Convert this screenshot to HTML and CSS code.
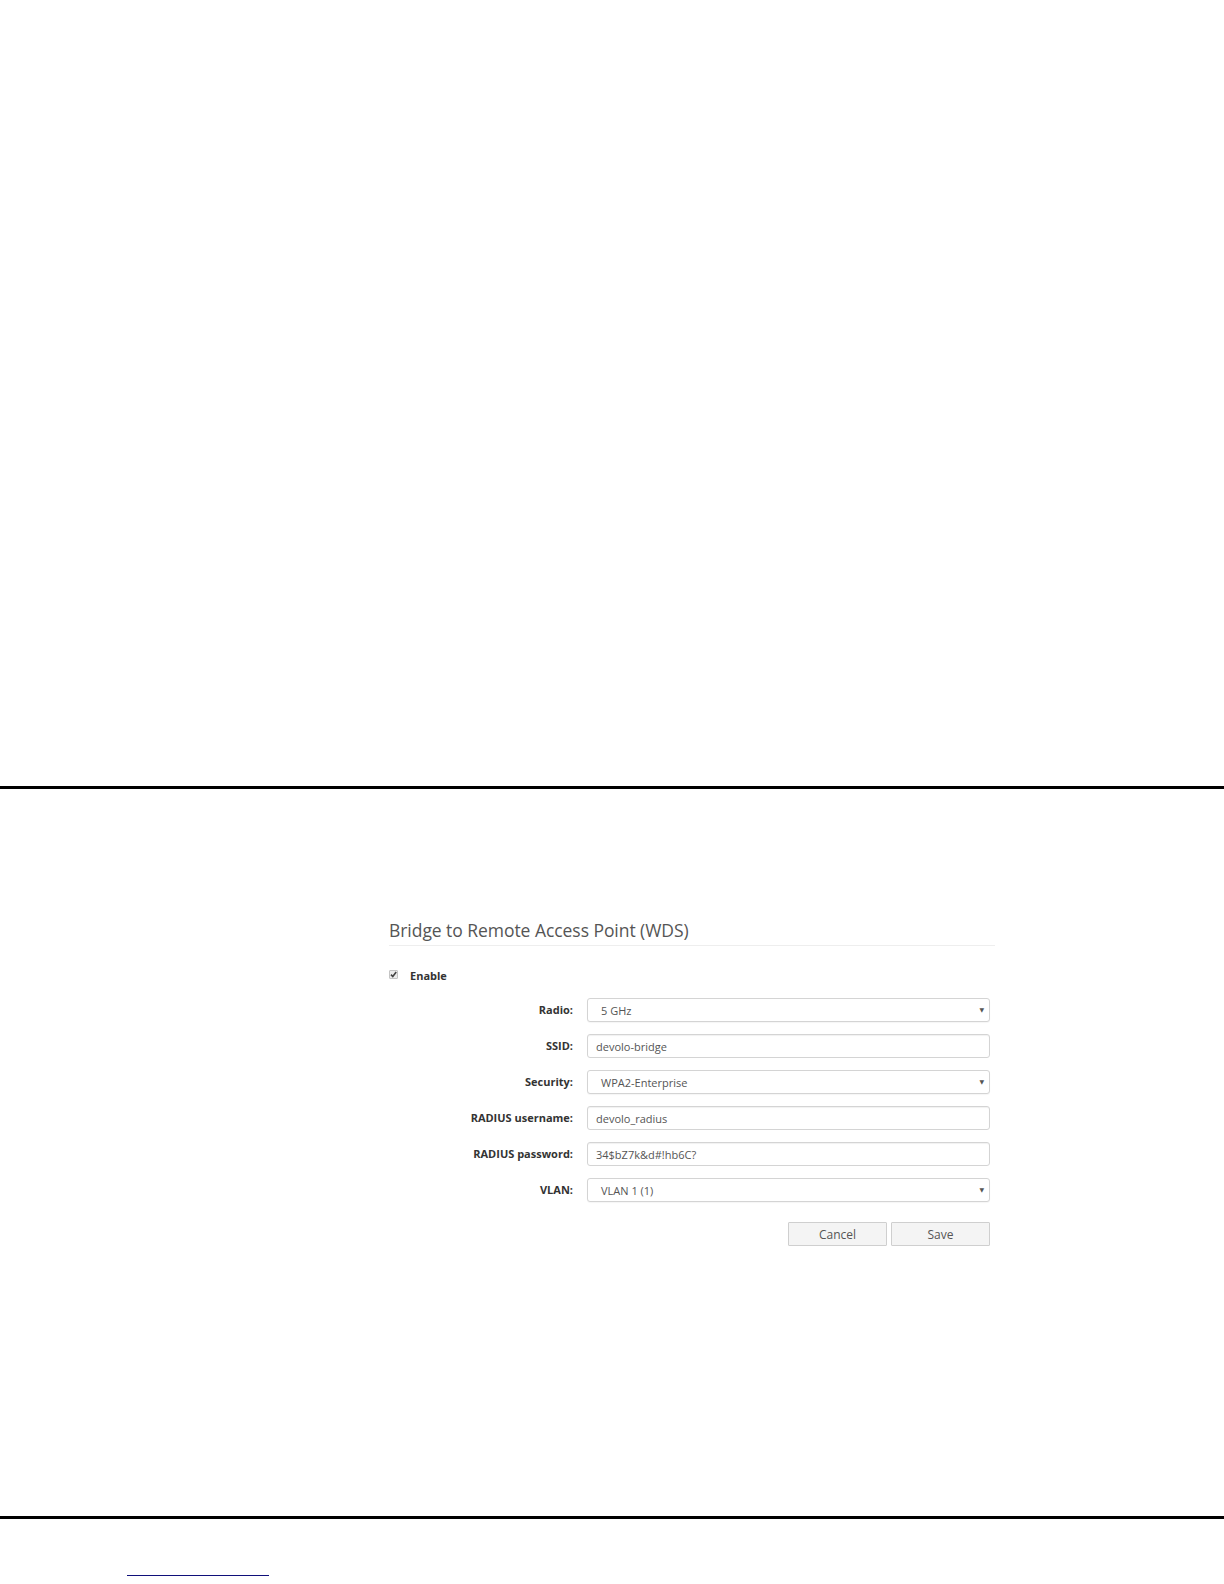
FILE: index.html
```html
<!DOCTYPE html>
<html lang="en">
<head>
<meta charset="utf-8">
<title>Bridge to Remote Access Point (WDS)</title>
<link rel="stylesheet" href="styles.css">
</head>
<body>
<div class="page">
  <div class="blank-top"></div>
  <div class="rule"></div>
  <section class="panel">
    <div class="form-wrap">
      <h2 class="title">Bridge to Remote Access Point (WDS)</h2>
      <label class="enable">
        <span class="check">
          <svg width="9" height="9" viewBox="0 0 9 9"><path d="M2 4.6 L3.8 6.6 L7.2 2" fill="none" stroke="#444" stroke-width="1.6"/></svg>
        </span>
        <span class="enable-text">Enable</span>
      </label>
      <div class="grid">
        <div class="lbl">Radio:</div>
        <div class="field select"><span class="val">5 GHz</span><span class="arrow">▼</span></div>

        <div class="lbl">SSID:</div>
        <div class="field input"><span class="val">devolo-bridge</span></div>

        <div class="lbl">Security:</div>
        <div class="field select"><span class="val">WPA2-Enterprise</span><span class="arrow">▼</span></div>

        <div class="lbl">RADIUS username:</div>
        <div class="field input"><span class="val">devolo_radius</span></div>

        <div class="lbl">RADIUS password:</div>
        <div class="field input"><span class="val">34$bZ7k&amp;d#!hb6C?</span></div>

        <div class="lbl">VLAN:</div>
        <div class="field select"><span class="val">VLAN 1 (1)</span><span class="arrow">▼</span></div>
      </div>
      <div class="buttons">
        <button class="btn" type="button">Cancel</button>
        <button class="btn" type="button">Save</button>
      </div>
    </div>
  </section>
  <div class="rule"></div>
  <footer class="foot">
    <a class="foot-link" href="#"></a>
  </footer>
</div>
</body>
</html>
```

FILE: styles.css
```css
* { box-sizing: border-box; }

html, body {
  margin: 0;
  padding: 0;
  background: #fff;
}

body {
  font-family: "Open Sans", "Noto Sans", "DejaVu Sans", sans-serif;
  color: #333;
}

.page {
  width: 1224px;
  height: 1584px;
  overflow: hidden;
}

.blank-top {
  height: 786px;
}

.rule {
  height: 3px;
  background: #000;
}

.panel {
  height: 727px;
  padding-top: 128px;
}

.form-wrap {
  margin-left: 389px;
  width: 606px;
}

.title {
  margin: 0;
  font-size: 17.5px;
  line-height: 26px;
  font-weight: 400;
  color: #555;
  padding-bottom: 2px;
  border-bottom: 1px solid #eee;
  letter-spacing: -0.05px;
}

.enable {
  display: flex;
  align-items: center;
  height: 20px;
  margin-top: 19px;
  gap: 12px;
}

.check {
  width: 9px;
  height: 9px;
  border: 1px solid #c4c4c4;
  border-radius: 1px;
  background: #ececec;
  display: flex;
  align-items: center;
  justify-content: center;
  position: relative;
  top: -1px;
}

.check svg {
  display: block;
  margin: -1px;
}

.enable-text {
  font-size: 11px;
  font-weight: 700;
  color: #333;
}

.grid {
  margin-top: 13px;
  display: grid;
  grid-template-columns: 184px 403px;
  grid-auto-rows: 24px;
  column-gap: 14px;
  row-gap: 12px;
  align-items: center;
}

.lbl {
  text-align: right;
  font-size: 11px;
  font-weight: 700;
  color: #333;
  line-height: 24px;
  height: 24px;
}

.field {
  height: 24px;
  border: 1px solid #d4d4d4;
  border-radius: 3px;
  background: #fff;
  box-shadow: inset 0 1px 1px rgba(0, 0, 0, 0.06);
  display: flex;
  align-items: center;
  font-size: 11px;
  color: #555;
}

.input {
  padding-left: 8px;
}

.select {
  padding-left: 13px;
  padding-right: 5px;
  justify-content: space-between;
  box-shadow: 0 1px 1px rgba(0, 0, 0, 0.04);
}

.arrow {
  font-size: 6px;
  color: #555;
}

.buttons {
  margin-top: 20px;
  display: flex;
  justify-content: flex-end;
  gap: 4px;
  padding-right: 5px;
}

.btn {
  width: 99px;
  height: 24px;
  margin: 0;
  padding: 0;
  font-family: "Open Sans", "Noto Sans", "DejaVu Sans", sans-serif;
  font-size: 12px;
  color: #555;
  background: #f4f4f4;
  border: 1px solid #cfcfcf;
  border-radius: 1px;
  cursor: pointer;
}

.foot {
  height: 65px;
  padding-top: 56px;
}

.foot-link {
  display: block;
  margin-left: 127px;
  width: 142px;
  height: 1px;
  background: #10107a;
}
```
